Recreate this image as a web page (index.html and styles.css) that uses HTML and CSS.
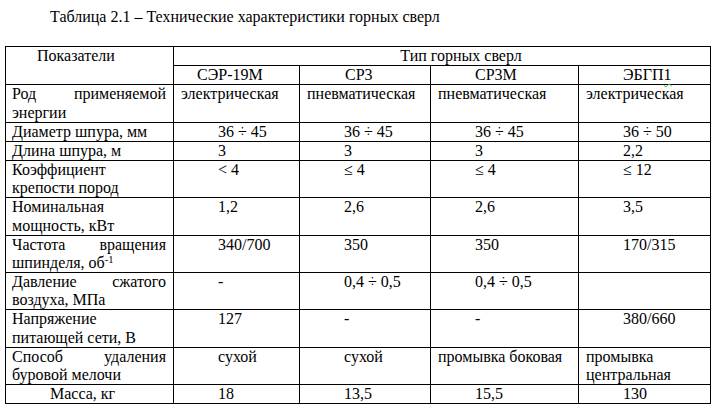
FILE: index.html
```html
<!DOCTYPE html>
<html lang="ru">
<head>
<meta charset="utf-8">
<title>Таблица 2.1</title>
<link rel="stylesheet" href="styles.css">
</head>
<body>
<div class="page">
  <p class="title">Таблица 2.1 – Технические характеристики горных сверл</p>
  <table class="spec">
    <colgroup>
      <col class="c1"><col class="c2"><col class="c3"><col class="c4"><col class="c5">
    </colgroup>
    <tr>
      <th rowspan="2" class="h-name">Показатели</th>
      <th colspan="4" class="h-type">Тип горных сверл</th>
    </tr>
    <tr>
      <th class="h-first">СЭР-19М</th>
      <th class="v v3">СР3</th>
      <th class="v">СР3М</th>
      <th class="v">ЭБГП<span class="squiggle">1</span></th>
    </tr>
    <tr>
      <td class="label">Род применяемой энергии</td>
      <td>электрическая</td>
      <td>пневматическая</td>
      <td>пневматическая</td>
      <td>электрическая</td>
    </tr>
    <tr>
      <td class="label">Диаметр шпура, мм</td>
      <td class="v">36 ÷ 45</td>
      <td class="v">36 ÷ 45</td>
      <td class="v">36 ÷ 45</td>
      <td class="v">36 ÷ 50</td>
    </tr>
    <tr>
      <td class="label">Длина шпура, м</td>
      <td class="v">3</td>
      <td class="v">3</td>
      <td class="v">3</td>
      <td class="v">2,2</td>
    </tr>
    <tr>
      <td class="label">Коэффициент крепости пород</td>
      <td class="v">&lt; 4</td>
      <td class="v">≤ 4</td>
      <td class="v">≤ 4</td>
      <td class="v">≤ 12</td>
    </tr>
    <tr>
      <td class="label">Номинальная мощность, кВт</td>
      <td class="v">1,2</td>
      <td class="v">2,6</td>
      <td class="v">2,6</td>
      <td class="v">3,5</td>
    </tr>
    <tr>
      <td class="label">Частота вращения шпинделя, об<sup class="sup">-1</sup></td>
      <td class="v">340/700</td>
      <td class="v">350</td>
      <td class="v">350</td>
      <td class="v">170/315</td>
    </tr>
    <tr>
      <td class="label">Давление сжатого воздуха, МПа</td>
      <td class="v">-</td>
      <td class="v">0,4 ÷ 0,5</td>
      <td class="v">0,4 ÷ 0,5</td>
      <td class="v"></td>
    </tr>
    <tr>
      <td class="label">Напряжение питающей сети, В</td>
      <td class="v">127</td>
      <td class="v">-</td>
      <td class="v">-</td>
      <td class="v">380/660</td>
    </tr>
    <tr>
      <td class="label">Способ удаления буровой мелочи</td>
      <td class="v">сухой</td>
      <td class="v">сухой</td>
      <td>промывка боковая</td>
      <td>промывка центральная</td>
    </tr>
    <tr>
      <td class="label-mass">Масса, кг</td>
      <td class="v">18</td>
      <td class="v">13,5</td>
      <td class="v">15,5</td>
      <td class="v">130</td>
    </tr>
  </table>
</div>
</body>
</html>
```

FILE: styles.css
```css
html, body {
  margin: 0;
  background: #fff;
}

body {
  font-family: "Liberation Serif", Tinos, "Times New Roman", Times, "DejaVu Serif", serif;
  font-size: 16px;
  line-height: 18.15px;
  color: #000;
}

.page {
  padding: 8px 0 0 5px;
}

.title {
  margin: 0 0 20px 45px;
}

.spec {
  border-collapse: collapse;
  table-layout: fixed;
  width: 705px;
  font-family: inherit;
}

.c1 { width: 168px; }
.c2 { width: 126px; }
.c3 { width: 131px; }
.c4 { width: 148px; }
.c5 { width: 132px; }

.spec th,
.spec td {
  border: 1px solid #000;
  padding: 0 7px 0 7px;
  vertical-align: top;
  text-align: left;
  font-weight: normal;
  font-family: inherit;
}

.spec .label {
  text-align: justify;
  padding-left: 6px;
}

.spec .label-mass {
  padding-left: 44px;
}

.spec .h-name {
  padding-left: 31px;
}

.spec .h-type {
  text-align: center;
  padding-left: 45px;
}

.spec .h-first {
  padding-left: 23px;
}

.spec .v {
  padding-left: 44px;
}

.spec .v3 {
  padding-left: 45px;
}

.sup {
  font-size: 10.5px;
  line-height: 0;
  vertical-align: 5px;
}

.squiggle {
  text-decoration: underline wavy #2fb82f;
  text-decoration-thickness: 1px;
  text-underline-offset: 3px;
}
```
